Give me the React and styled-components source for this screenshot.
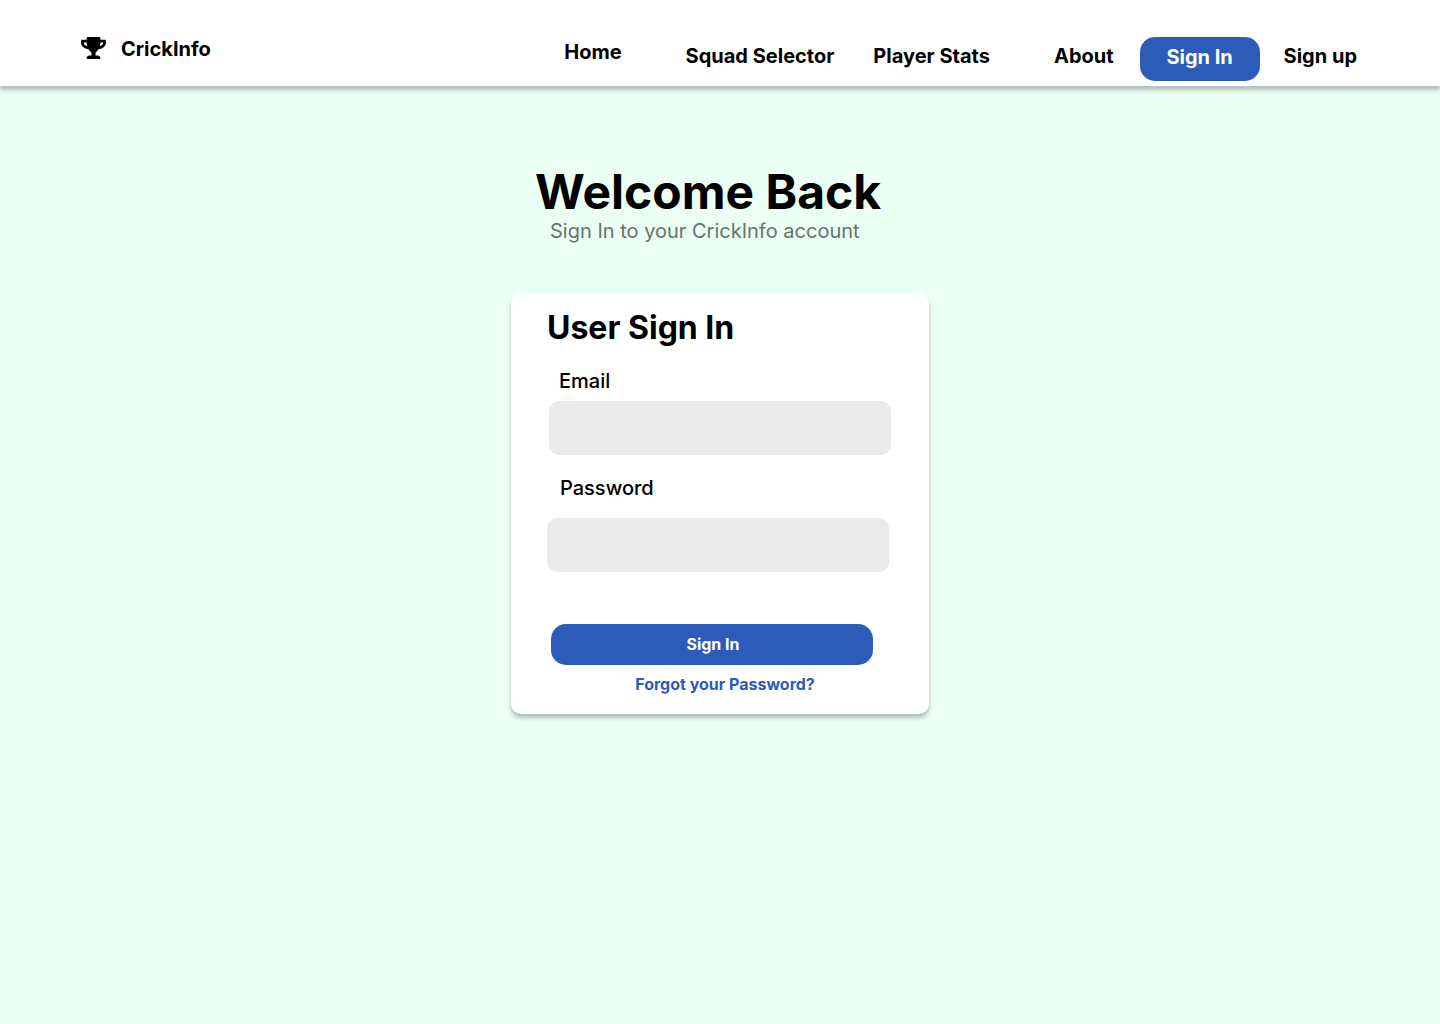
import React from "react";
import styled, { createGlobalStyle } from "styled-components";
import { FaTrophy } from "react-icons/fa";

const colors = {
  page: "#ebfff5",
  brand: "#2d5bb9",
  field: "#eaeaea",
  muted: "#67736d",
};

const GlobalStyle = createGlobalStyle`
  *, *::before, *::after { box-sizing: border-box; }
  body {
    margin: 0;
    min-height: 100vh;
    background: ${colors.page};
    color: #000;
    font-family: Inter, "Liberation Sans", sans-serif;
    font-size: 20px;
    line-height: 24px;
  }
`;

const Header = styled.header`
  display: flex;
  flex-wrap: wrap;
  align-items: flex-start;
  justify-content: space-between;
  gap: 24px;
  padding: 37px 83px 5px 81px;
  background: #fff;
  box-shadow: 0 4px 4px rgba(0, 0, 0, 0.25);
`;

const Brand = styled.a`
  display: flex;
  align-items: flex-start;
  gap: 15px;
  color: inherit;
  font-weight: 700;
  text-decoration: none;
`;

const BrandIcon = styled(FaTrophy)`
  width: 25px;
  height: 22px;
`;

const Nav = styled.nav`
  display: flex;
  flex-wrap: wrap;
  align-items: flex-start;
  gap: 24px;
`;

const NavLink = styled.a`
  margin-left: ${({ $space = 0 }) => $space}px;
  padding-top: ${({ $raised }) => ($raised ? 3 : 7)}px;
  color: inherit;
  font-weight: 700;
  text-decoration: none;
`;

const NavButton = styled.button`
  width: 120px;
  margin-left: 2px;
  padding: 8px 2px 12px;
  border: 0;
  border-radius: 15px;
  background: ${colors.brand};
  color: #fff;
  font: inherit;
  font-weight: 700;
  cursor: pointer;
`;

const Main = styled.main`
  display: flex;
  flex-direction: column;
  gap: 50px;
  width: 100%;
  max-width: 418px;
  margin: 0 auto;
  padding: 79px 0 48px;
`;

const Intro = styled.div`
  padding-left: 24px;
`;

const Title = styled.h1`
  margin: 0;
  font-size: 48px;
  font-weight: 700;
  line-height: 54px;
`;

const Subtitle = styled.p`
  margin: 0;
  padding-left: 15px;
  color: ${colors.muted};
  font-weight: 400;
`;

const Card = styled.form`
  display: flex;
  flex-direction: column;
  padding: 15px 38px 20px 36px;
  border-radius: 10px;
  background: #fff;
  box-shadow: 0 4px 4px rgba(0, 0, 0, 0.25);
`;

const CardTitle = styled.h2`
  margin: 0 0 21px;
  font-size: 32px;
  font-weight: 700;
  line-height: 40px;
`;

const Field = styled.div`
  display: flex;
  flex-direction: column;
  gap: ${({ $gap }) => $gap}px;
  padding: ${({ $side }) => ($side === "right" ? "0 0 0 2px" : "0 2px 0 0")};

  & + & {
    margin-top: 21px;
  }
`;

const Label = styled.label`
  padding-left: ${({ $indent }) => $indent}px;
  font-weight: 500;
`;

const Input = styled.input`
  width: 100%;
  height: 54px;
  padding: 0 16px;
  border: 0;
  border-radius: 10px;
  background: ${colors.field};
  font: inherit;
`;

const SubmitButton = styled.button`
  margin: 52px 18px 9px 4px;
  padding: 10px 0 11px 2px;
  border: 0;
  border-radius: 15px;
  background: ${colors.brand};
  color: #fff;
  font: inherit;
  font-size: 16px;
  font-weight: 700;
  line-height: 20px;
  cursor: pointer;
`;

const ForgotLink = styled.a`
  align-self: center;
  padding-left: 12px;
  color: ${colors.brand};
  font-size: 16px;
  font-weight: 700;
  line-height: 20px;
  text-decoration: none;
`;

export default function App() {
  return (
    <>
      <GlobalStyle />
      <Header>
        <Brand href="#home">
          <BrandIcon aria-hidden="true" />
          CrickInfo
        </Brand>
        <Nav>
          <NavLink href="#home" $raised>Home</NavLink>
          <NavLink href="#squad" $space={40}>Squad Selector</NavLink>
          <NavLink href="#stats" $space={15}>Player Stats</NavLink>
          <NavLink href="#about" $space={40}>About</NavLink>
          <NavButton type="button">Sign In</NavButton>
          <NavLink href="#signup">Sign up</NavLink>
        </Nav>
      </Header>
      <Main>
        <Intro>
          <Title>Welcome Back</Title>
          <Subtitle>Sign In to your CrickInfo account</Subtitle>
        </Intro>
        <Card onSubmit={(event) => event.preventDefault()}>
          <CardTitle>User Sign In</CardTitle>
          <Field $gap={8} $side="right">
            <Label htmlFor="email" $indent={10}>Email</Label>
            <Input id="email" type="email" autoComplete="email" />
          </Field>
          <Field $gap={18} $side="left">
            <Label htmlFor="password" $indent={13}>Password</Label>
            <Input id="password" type="password" autoComplete="current-password" />
          </Field>
          <SubmitButton type="submit">Sign In</SubmitButton>
          <ForgotLink href="#forgot">Forgot your Password?</ForgotLink>
        </Card>
      </Main>
    </>
  );
}
